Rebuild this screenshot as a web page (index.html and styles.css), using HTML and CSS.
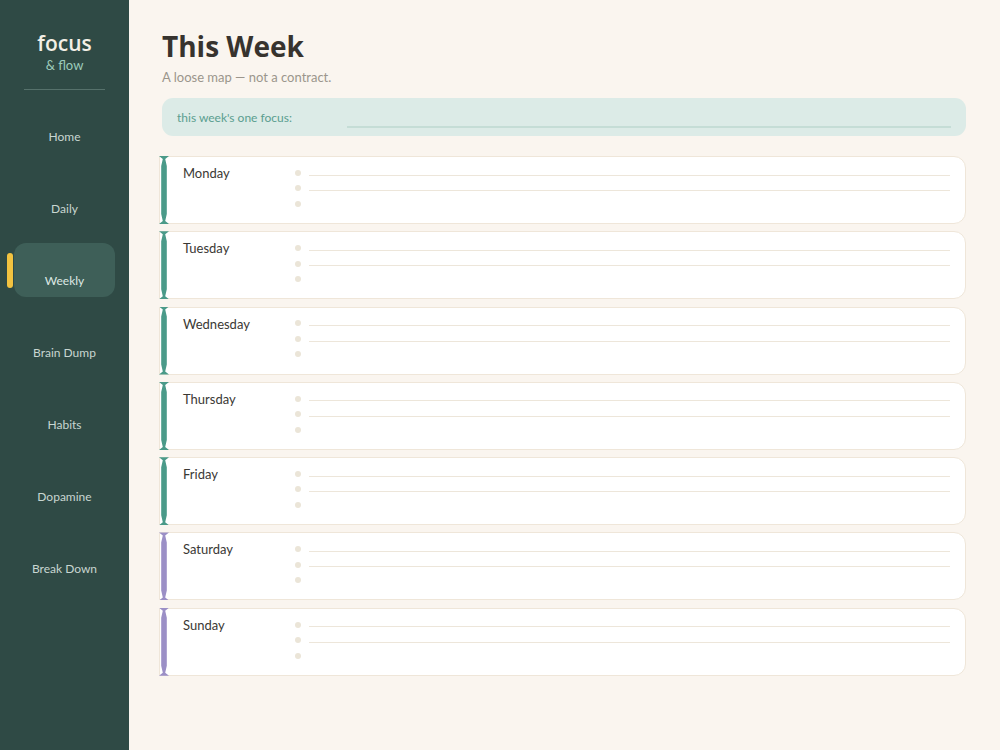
FILE: index.html
```html
<!doctype html>
<html>
  <head>
    <title>focus &amp; flow - This Week</title>
    <meta name="viewport" content="width=device-width, initial-scale=1" />
    <link rel="stylesheet" href="styles.css">
  </head>
  <body>
    <nav class="sidebar">
      <div class="brand">
        <div class="brand-name">focus</div>
        <div class="brand-sub">&amp; flow</div>
      </div>
      <a class="nav-item">Home</a>
      <a class="nav-item">Daily</a>
      <a class="nav-item active">Weekly</a>
      <a class="nav-item">Brain Dump</a>
      <a class="nav-item">Habits</a>
      <a class="nav-item">Dopamine</a>
      <a class="nav-item">Break Down</a>
    </nav>
    <main class="main">
      <h1>This Week</h1>
      <p class="subtitle">A loose map — not a contract.</p>
      <div class="focus-box">
        <label>this week's one focus:</label>
        <span class="focus-line"></span>
      </div>
      <div class="days">
        <div class="day">
          <div class="day-name">Monday</div>
          <ul class="tasks"><li></li><li></li><li></li></ul>
        </div>
        <div class="day">
          <div class="day-name">Tuesday</div>
          <ul class="tasks"><li></li><li></li><li></li></ul>
        </div>
        <div class="day">
          <div class="day-name">Wednesday</div>
          <ul class="tasks"><li></li><li></li><li></li></ul>
        </div>
        <div class="day">
          <div class="day-name">Thursday</div>
          <ul class="tasks"><li></li><li></li><li></li></ul>
        </div>
        <div class="day">
          <div class="day-name">Friday</div>
          <ul class="tasks"><li></li><li></li><li></li></ul>
        </div>
        <div class="day weekend">
          <div class="day-name">Saturday</div>
          <ul class="tasks"><li></li><li></li><li></li></ul>
        </div>
        <div class="day weekend">
          <div class="day-name">Sunday</div>
          <ul class="tasks"><li></li><li></li><li></li></ul>
        </div>
      </div>
    </main>
  </body>
</html>
```

FILE: styles.css
```css
body {
  font-family: Lato, "Noto Sans", sans-serif;
  font-size: 13px;
  margin: 0px;
  display: flex;
  min-height: 750px;
  background-color: #faf5ef;
  color: #3a3834;
}
.sidebar {
  width: 129px;
  flex-shrink: 0;
  background-color: #2f4a45;
  display: flex;
  flex-direction: column;
  align-items: center;
  padding-top: 30px;
}
.brand {
  width: 81px;
  text-align: center;
  border-bottom: 1px solid #56716b;
  padding-bottom: 16px;
  margin-bottom: 9px;
}
.brand-name {
  font-family: "Open Sans", sans-serif;
  font-size: 21px;
  font-weight: 600;
  color: #f3efe6;
  line-height: 26px;
}
.brand-sub {
  font-size: 13px;
  color: #9ccbbb;
  margin-top: 1px;
}
.nav-item {
  position: relative;
  width: 101px;
  height: 54px;
  box-sizing: border-box;
  padding-bottom: 9px;
  margin-bottom: 18px;
  display: flex;
  align-items: flex-end;
  justify-content: center;
  font-size: 12px;
  color: #c8d6d1;
  border-radius: 12px;
}
.nav-item.active {
  background-color: #3e5f58;
  color: #dde8e4;
}
.nav-item.active::before {
  content: "";
  position: absolute;
  left: -7px;
  top: 10px;
  width: 6px;
  height: 35px;
  border-radius: 3px;
  background-color: #f2c340;
}
.main {
  flex: 1;
  padding: 28px 34px 0px 30px;
}
h1 {
  font-family: "Open Sans", sans-serif;
  font-size: 28px;
  font-weight: 700;
  color: #37332e;
  margin: 0px 0px 0px 3px;
  line-height: 36px;
}
.subtitle {
  font-size: 13px;
  color: #9b958c;
  margin: 5px 0px 13px 3px;
}
.focus-box {
  margin-left: 3px;
  height: 38px;
  background-color: #dcebe7;
  border-radius: 11px;
  display: flex;
  align-items: center;
  padding: 0px 15px;
}
.focus-box label {
  font-size: 12px;
  color: #5a9e8f;
  width: 170px;
  flex-shrink: 0;
}
.focus-line {
  flex: 1;
  align-self: flex-end;
  margin-bottom: 8px;
  border-bottom: 2px solid #c5ddd6;
}
.days {
  margin-top: 20px;
  display: flex;
  flex-direction: column;
  gap: 7.3px;
}
.day {
  position: relative;
  height: 68px;
  box-sizing: border-box;
  background-color: #ffffff;
  border: 1px solid #efe6d9;
  border-radius: 0px 12px 12px 0px;
  display: flex;
  padding: 7px 15px 0px 23px;
}
/* accent bar with pinched ends */
.day::before {
  content: "";
  position: absolute;
  left: -1px;
  top: -1px;
  bottom: -1px;
  width: 10px;
  background-color: #4a9a89;
  clip-path: polygon(0 0, 100% 0, 62% 3px, 78% 10px, 78% calc(100% - 10px), 62% calc(100% - 3px), 100% 100%, 0 100%, 38% calc(100% - 3px), 22% calc(100% - 10px), 22% 10px, 38% 3px);
}
.day.weekend::before {
  background-color: #9b8fc6;
}
.day-name {
  width: 112px;
  font-size: 13px;
  color: #3a3834;
  line-height: 18px;
}
.tasks {
  flex: 1;
  list-style: none;
  margin: 0px;
  padding: 1px 0px 0px 0px;
}
.tasks li {
  display: flex;
  align-items: center;
  height: 15.5px;
}
.tasks li::before {
  content: "";
  width: 6px;
  height: 6px;
  border-radius: 50%;
  background-color: #ebe5d8;
  margin-right: 8px;
}
.tasks li::after {
  content: "";
  flex: 1;
  align-self: flex-end;
  border-bottom: 1px solid #ede6da;
  margin-bottom: 5px;
}
.tasks li:last-child::after {
  border-bottom: none;
}
```
